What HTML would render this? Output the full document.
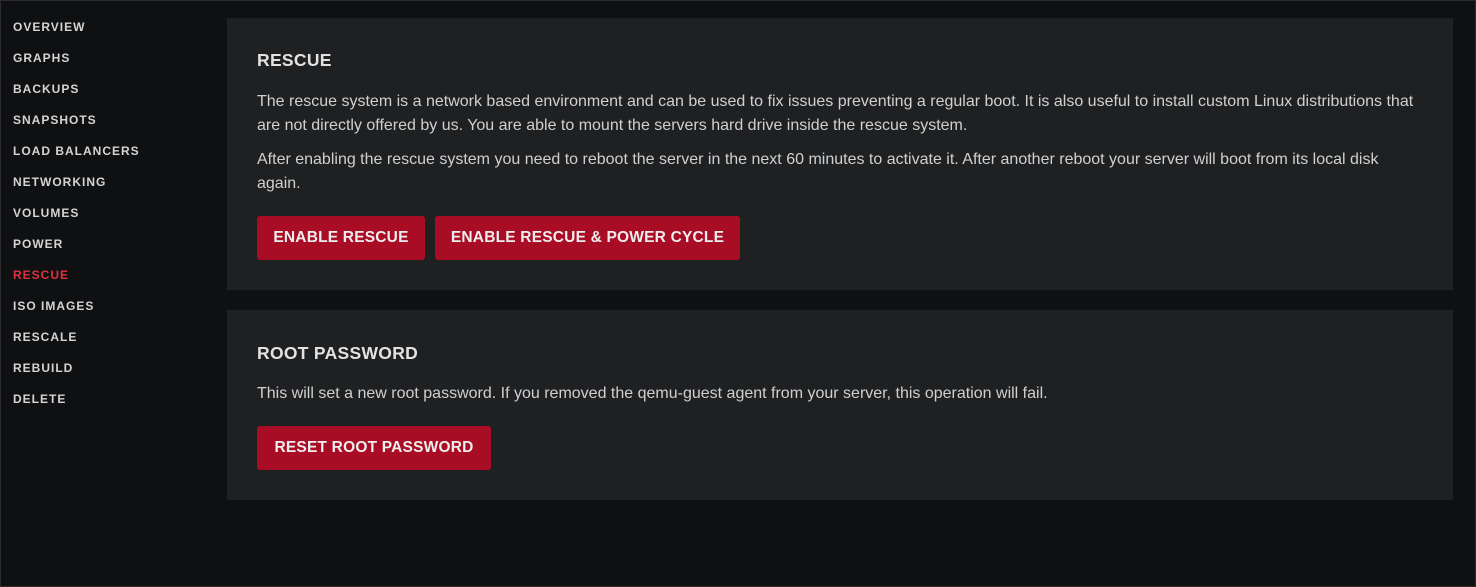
<!DOCTYPE html>
<html><head><style>
html,body{margin:0;padding:0}
body{width:1474px;height:585px;background:#0f1012;border:1px solid #2c2c2e;font-family:"Liberation Sans",sans-serif;position:relative;overflow:hidden}
.nav{position:absolute;left:12px;top:19px}
.nav div{height:31px;font-size:12px;font-weight:bold;letter-spacing:1px;color:#d4d4d4}
.nav .a{color:#e0303f}
.card{position:absolute;left:226px;width:1226px;background:#1f2022}
h2{position:absolute;left:30px;margin:0;font-size:17.5px;font-weight:bold;color:#e2e2e2;letter-spacing:.3px}
p{position:absolute;left:30px;margin:0;font-size:16px;line-height:24px;color:#d0d0d0;width:1162px}
.btn{position:absolute;height:44px;line-height:44px;background:#a90d25;color:#eee;font-weight:bold;font-size:15.5px;border-radius:3px;text-align:center;letter-spacing:.2px}
</style></head><body>
<div class="nav">
<div>OVERVIEW</div><div>GRAPHS</div><div>BACKUPS</div><div>SNAPSHOTS</div><div>LOAD BALANCERS</div><div>NETWORKING</div><div>VOLUMES</div><div>POWER</div><div class="a">RESCUE</div><div>ISO IMAGES</div><div>RESCALE</div><div>REBUILD</div><div>DELETE</div>
</div>
<div class="card" style="top:17px;height:272px">
<h2 style="top:32px">RESCUE</h2>
<p style="top:72px">The rescue system is a network based environment and can be used to fix issues preventing a regular boot. It is also useful to install custom Linux distributions that are not directly offered by us. You are able to mount the servers hard drive inside the rescue system.</p>
<p style="top:130px">After enabling the rescue system you need to reboot the server in the next 60 minutes to activate it. After another reboot your server will boot from its local disk again.</p>
<div class="btn" style="left:30px;top:198px;width:168px">ENABLE RESCUE</div>
<div class="btn" style="left:208px;top:198px;width:305px">ENABLE RESCUE &amp; POWER CYCLE</div>
</div>
<div class="card" style="top:309px;height:190px">
<h2 style="top:33px">ROOT PASSWORD</h2>
<p style="top:72px">This will set a new root password. If you removed the qemu-guest agent from your server, this operation will fail.</p>
<div class="btn" style="left:30px;top:116px;width:234px">RESET ROOT PASSWORD</div>
</div>
</body></html>
